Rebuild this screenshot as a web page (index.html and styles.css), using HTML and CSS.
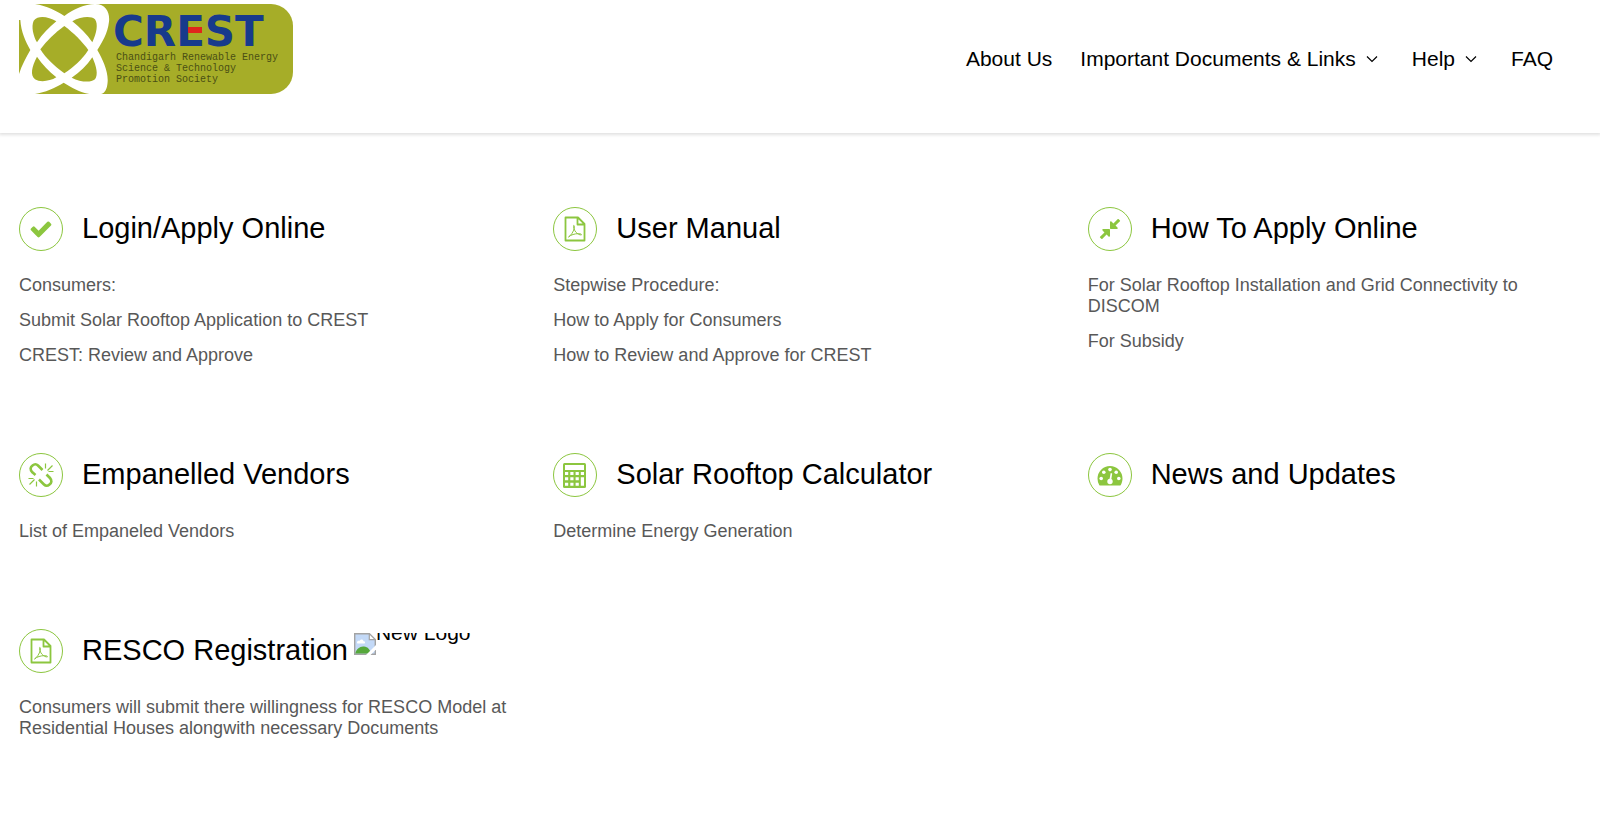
FILE: index.html
```html
<!DOCTYPE html>
<html lang="en">
<head>
<meta charset="utf-8">
<meta name="viewport" content="width=device-width, initial-scale=1">
<title>CREST</title>
<link rel="stylesheet" href="styles.css">
</head>
<body>
<svg class="defs" width="0" height="0" aria-hidden="true">
  <symbol id="pdf" viewBox="0 0 28 28">
    <path d="M4.500 2.500H17l6.500 6.500V25.500h-19zM16.500 3v6.500h6.500" fill="none" stroke="currentColor" stroke-width="1.800" stroke-linejoin="round"/>
    <path d="M7.500 22c2.500-1.500 5-5.500 5.700-8.500.5-2.200-.2-3.400-.5-3-.5.800.3 4.300 2 6.500 1.600 2 4.300 3.200 5.600 2.900.8-.3-.5-1.400-3-1.300-3.200.1-7.600 1.200-9.800 3.400z" fill="none" stroke="currentColor" stroke-width="1"/>
  </symbol>
  <symbol id="chevron" viewBox="0 0 12 12">
    <path d="M1 3.500l5 5 5-5" fill="none" stroke="currentColor" stroke-width="1.200"/>
  </symbol>
</svg>

<header class="site-header">
  <a class="logo" href="#" aria-label="CREST home">
    <svg width="274" height="90" viewBox="0 0 274 90">
      <path fill="#a6ad28" d="M0 0h252a22 22 0 0 1 22 22v46a22 22 0 0 1-22 22H0z"/>
      <g transform="translate(-4 -4) scale(.3333)">
        <path fill="#fff" d="M148 48C175 28 210 12 240 12C275 12 285 40 282 65C278 100 262 125 247 150C262 175 280 215 278 245C276 275 265 284 245 284C205 284 175 265 146 248C120 264 90 277 60 282L0 300L12 222C20 195 35 170 46 150C32 125 18 95 16 60L8 60L8 8L60 12C95 18 125 32 148 48Z"/>
        <g fill="#a6ad28">
          <path d="M148 78C175 98 202 125 220 150C202 178 175 202 148 220C118 198 92 175 76 148C95 122 120 98 148 78Z"/>
          <path d="M172 64C200 48 230 48 240 58C250 72 245 100 232 127C215 102 195 82 172 64Z"/>
          <path d="M124 64C100 50 70 45 56 62C48 80 55 108 66 127C82 102 102 82 124 64Z"/>
          <path d="M66 170C50 200 45 225 60 238C75 248 105 244 124 232C102 215 82 193 66 170Z"/>
          <path d="M232 172C215 197 195 217 170 233C195 245 225 250 240 238C250 225 245 200 232 172Z"/>
        </g>
      </g>
      <text class="logo-name" x="94" y="42">CREST</text>
      <rect x="169" y="23" width="14" height="6" fill="#e0261c"/>
      <g class="logo-line">
        <text x="97" y="56">Chandigarh Renewable Energy</text>
        <text x="97" y="67">Science &amp; Technology</text>
        <text x="97" y="78">Promotion Society</text>
      </g>
    </svg>
  </a>
  <nav class="menu">
    <a href="#">About Us</a>
    <button type="button" class="drop">Important Documents &amp; Links <svg class="chevron"><use href="#chevron"/></svg></button>
    <button type="button" class="drop">Help <svg class="chevron"><use href="#chevron"/></svg></button>
    <a href="#">FAQ</a>
  </nav>
</header>

<main class="cards">
  <section class="card">
    <div class="card-head">
      <span class="badge"><svg class="glyph" viewBox="0 0 1792 1792"><path fill="currentColor" d="M1671 566q0 40-28 68l-724 724-136 136q-28 28-68 28t-68-28l-136-136-362-362q-28-28-28-68t28-68l136-136q28-28 68-28t68 28l294 295 656-657q28-28 68-28t68 28l136 136q28 28 28 68z"/></svg></span>
      <h2>Login/Apply Online</h2>
    </div>
    <p>Consumers:</p>
    <p><a href="#">Submit Solar Rooftop Application to CREST</a></p>
    <p><a href="#">CREST: Review and Approve</a></p>
  </section>

  <section class="card">
    <div class="card-head">
      <span class="badge"><svg class="glyph-large"><use href="#pdf"/></svg></span>
      <h2>User Manual</h2>
    </div>
    <p>Stepwise Procedure:</p>
    <p><a href="#">How to Apply for Consumers</a></p>
    <p><a href="#">How to Review and Approve for CREST</a></p>
  </section>

  <section class="card">
    <div class="card-head">
      <span class="badge"><svg class="glyph" viewBox="0 0 1792 1792"><path fill="currentColor" d="M896 960v448q0 26-19 45t-45 19-45-19l-144-144-332 332q-10 10-23 10t-23-10l-114-114q-10-10-10-23t10-23l332-332-144-144q-19-19-19-45t19-45 45-19h448q26 0 45 19t19 45zm755-672q0 13-10 23l-332 332 144 144q19 19 19 45t-19 45-45 19h-448q-26 0-45-19t-19-45v-448q0-26 19-45t45-19 45 19l144 144 332-332q10-10 23-10t23 10l114 114q10 10 10 23z"/></svg></span>
      <h2>How To Apply Online</h2>
    </div>
    <p><a href="#">For Solar Rooftop Installation and Grid Connectivity to DISCOM</a></p>
    <p><a href="#">For Subsidy</a></p>
  </section>

  <section class="card">
    <div class="card-head">
      <span class="badge"><svg class="glyph-large" viewBox="0 0 28 28" fill="none" stroke="currentColor">
        <path stroke-width="2.600" d="M5.500 11.500C2.500 8.500 3.500 6 5.500 4.500C7.500 2.800 9.500 3 11 4.500L15.500 9M4.800 10.800L8.500 14M22.500 16.500C25.500 19.500 24.500 22 22.500 23.500C20.500 25.200 18.500 25 17 23.500L12 18.500M19.500 13.500L23.500 17.500"/>
        <path stroke-width="1.200" d="M18.500 2.500v5M25.500 4.500l-5 5M21.500 10.500h5M9.500 20.500v5M7.500 18.500l-5 5M1.500 17.500h5"/>
      </svg></span>
      <h2>Empanelled Vendors</h2>
    </div>
    <p><a href="#">List of Empaneled Vendors</a></p>
  </section>

  <section class="card">
    <div class="card-head">
      <span class="badge"><svg class="glyph-large" viewBox="0 0 28 28">
        <rect x="2" y="2" width="23" height="25" rx="1.500" fill="currentColor"/>
        <g fill="#fff">
          <rect x="4" y="4" width="19" height="5"/>
          <path d="M4 11h3.200v3H4zM9.300 11h3.200v3H9.300zM14.600 11h3.200v3h-3.200zM19.800 11H23v3h-3.200zM4 16.200h3.200v3H4zM9.300 16.200h3.200v3H9.300zM14.600 16.200h3.200v3h-3.200zM4 21.800h3.200v3H4zM9.300 21.800h3.200v3H9.300zM14.600 21.800h3.200v3h-3.200zM19.800 16.200H23v8.600h-3.200z"/>
        </g>
      </svg></span>
      <h2>Solar Rooftop Calculator</h2>
    </div>
    <p><a href="#">Determine Energy Generation</a></p>
  </section>

  <section class="card">
    <div class="card-head">
      <span class="badge"><svg class="glyph-large" viewBox="0 0 28 28">
        <path fill="currentColor" d="M1.500 17.500a12.500 12.500 0 0 1 25 0c0 2.300-.6 4.400-1.700 6.400-.3.600-.7.700-1.100.7H4.300c-.4 0-.8-.1-1.100-.7A13 13 0 0 1 1.500 17.500z"/>
        <g fill="#fff">
          <circle cx="5.200" cy="17.500" r="1.800"/><circle cx="7.800" cy="11.300" r="1.800"/><circle cx="14" cy="8.600" r="1.800"/><circle cx="20.200" cy="11.300" r="1.800"/><circle cx="22.800" cy="17.500" r="1.800"/>
          <circle cx="14" cy="20.500" r="2.700"/>
          <path d="M13.200 20l1.500-8 1.500.4-1.200 8z"/>
        </g>
      </svg></span>
      <h2>News and Updates</h2>
    </div>
  </section>

  <section class="card">
    <div class="card-head">
      <span class="badge"><svg class="glyph-large"><use href="#pdf"/></svg></span>
      <h2>RESCO Registration</h2>
      <span class="new-logo">
        <svg width="22" height="22" viewBox="0 0 22 22" aria-hidden="true">
          <path d="M.7.700h14.600l6 6v14.600H.7z" fill="#c3d9f7" stroke="#a3a3a3" stroke-width="1.400"/>
          <path d="M3 9.500c0-2 2-2 2.500-1.500.8-2.200 3.800-2 4 .2 2 0 2 2.300.5 2.300H4c-.6 0-1-.4-1-1z" fill="#fff"/>
          <path d="M1.400 20.600c.5-4.600 5-7.600 8.600-7 4 .4 6 3 7 7z" fill="#56a83b"/>
          <path d="M15.300.700v6h6z" fill="#fff" stroke="#a3a3a3" stroke-width="1.200"/>
          <path d="M22 12v4.500L16.500 22H12z" fill="#fff"/>
        </svg>
        <span class="new-logo-text">New Logo</span>
      </span>
    </div>
    <p><a href="#">Consumers will submit there willingness for RESCO Model at Residential Houses alongwith necessary Documents</a></p>
  </section>
</main>
</body>
</html>
```
FILE: styles.css
```css
* {
  box-sizing: border-box;
}

body {
  margin: 0;
  background: #fff;
  color: #000;
  font-family: "Liberation Sans", Arial, sans-serif;
}

a {
  color: inherit;
  text-decoration: none;
}

.defs {
  position: absolute;
}

.site-header {
  display: flex;
  justify-content: space-between;
  align-items: flex-start;
  padding: 4px 47px 39px 19px;
  box-shadow: 0 1px 3px 1px #e2e2e2;
}

.logo svg {
  display: block;
}

.logo-name {
  font: bold 42px "DejaVu Sans", sans-serif;
  fill: #173a8c;
}

.logo-line {
  font: 10px "Liberation Mono", monospace;
  fill: #4a4f14;
}

.menu {
  display: flex;
  gap: 28px;
  padding-top: 43px;
  font-size: 21px;
  line-height: 24px;
}

.drop {
  display: flex;
  align-items: center;
  gap: 10px;
  padding: 0 6px 0 0;
  border: 0;
  background: none;
  color: inherit;
  font: inherit;
}

.chevron {
  width: 12px;
  height: 12px;
}

.cards {
  display: grid;
  grid-template-columns: repeat(3, 1fr);
  column-gap: 41px;
  row-gap: 86px;
  padding: 74px 19px;
}

.card-head {
  display: flex;
  align-items: flex-start;
  margin-bottom: 24px;
}

.badge {
  display: flex;
  flex: none;
  align-items: center;
  justify-content: center;
  width: 44px;
  height: 44px;
  margin-right: 19px;
  border: 1px solid #8cc63f;
  border-radius: 50%;
  color: #8cc63f;
}

.glyph {
  width: 24px;
  height: 24px;
}

.glyph-large {
  width: 28px;
  height: 28px;
}

h2 {
  margin: 0;
  font-size: 29px;
  font-weight: 400;
  line-height: 42px;
}

.card p {
  margin: 0 0 14px;
  color: #585858;
  font-size: 18px;
  line-height: 21px;
}

.card p:last-child {
  margin-bottom: 1px;
}

.new-logo {
  display: flex;
  height: 22px;
  margin: 4px 0 0 6px;
  overflow: hidden;
}

.new-logo-text {
  font-size: 21px;
  line-height: 0;
}
```
